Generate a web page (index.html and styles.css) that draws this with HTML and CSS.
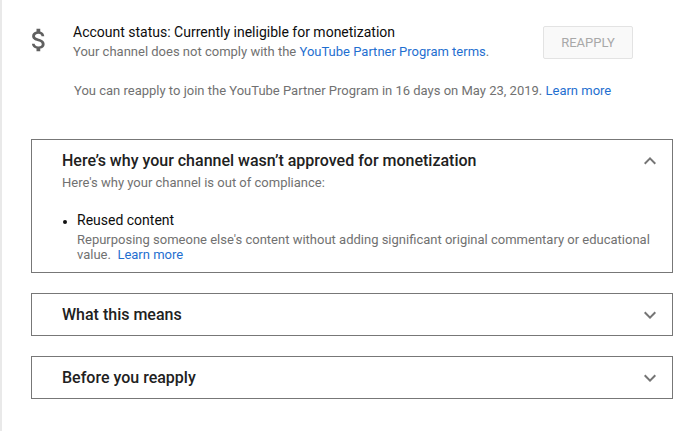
FILE: index.html
```html
<!DOCTYPE html>
<html lang="en">
<head>
<meta charset="utf-8">
<title>Monetization</title>
<link rel="stylesheet" href="styles.css">
</head>
<body>
<div class="page">
  <section class="status">
    <svg class="status-icon" viewBox="0 0 24 24" width="30" height="30" aria-hidden="true">
      <path d="M11.8 10.9c-2.27-.59-3-1.2-3-2.15 0-1.09 1.01-1.850 2.7-1.85 1.78 0 2.44.85 2.5 2.1h2.21c-.07-1.72-1.12-3.3-3.21-3.81V3h-3v2.16c-1.94.42-3.5 1.68-3.5 3.61 0 2.31 1.91 3.46 4.7 4.13 2.5.6 3 1.48 3 2.41 0 .69-.49 1.79-2.7 1.79-2.06 0-2.87-.92-2.98-2.1h-2.2c.12 2.19 1.76 3.42 3.68 3.83V21h3v-2.15c1.95-.37 3.5-1.5 3.5-3.55 0-2.84-2.43-3.81-4.7-4.4z"/>
    </svg>
    <div class="status-body">
      <div class="status-top">
        <div class="status-text">
          <div class="status-title">Account status: Currently ineligible for monetization</div>
          <div class="status-sub">Your channel does not comply with the <a class="link" href="#">YouTube Partner Program terms</a>.</div>
        </div>
        <button class="btn-reapply" type="button">Reapply</button>
      </div>
      <p class="note">You can reapply to join the YouTube Partner Program in 16 days on May 23, 2019. <a class="link" href="#">Learn more</a></p>
    </div>
  </section>

  <section class="panel panel-open">
    <div class="panel-head">
      <h2 class="panel-title">Here’s why your channel wasn’t approved for monetization</h2>
      <svg class="chev" viewBox="0 0 24 24" width="24" height="24" aria-hidden="true"><path d="M12 8l-6 6 1.41 1.41L12 10.83l4.59 4.58L18 14z"/></svg>
    </div>
    <div class="panel-sub">Here's why your channel is out of compliance:</div>
    <div class="reason">
      <span class="bullet"></span>
      <div class="reason-body">
        <div class="reason-title">Reused content</div>
        <div class="reason-desc">Repurposing someone else's content without adding significant original commentary or educational value.&nbsp; <a class="link" href="#">Learn more</a></div>
      </div>
    </div>
  </section>

  <section class="panel">
    <div class="panel-head">
      <h2 class="panel-title">What this means</h2>
      <svg class="chev" viewBox="0 0 24 24" width="24" height="24" aria-hidden="true"><path d="M16.59 8.59L12 13.170 7.41 8.59 6 10l6 6 6-6z"/></svg>
    </div>
  </section>

  <section class="panel">
    <div class="panel-head">
      <h2 class="panel-title">Before you reapply</h2>
      <svg class="chev" viewBox="0 0 24 24" width="24" height="24" aria-hidden="true"><path d="M16.59 8.59L12 13.170 7.41 8.59 6 10l6 6 6-6z"/></svg>
    </div>
  </section>
</div>
</body>
</html>
```
FILE: styles.css
```css
* { box-sizing: border-box; }
html, body { margin: 0; padding: 0; background: #fff; }
body {
  font-family: Roboto, "Liberation Sans", Arial, sans-serif;
  color: #0d0d0d;
  width: 690px;
  height: 431px;
  overflow: hidden;
}
.page {
  border-left: 2px solid #e9e9e9;
  min-height: 431px;
  padding: 22px 17px 0 29px;
}
.status {
  display: flex;
  align-items: flex-start;
}
.status-icon {
  fill: #606060;
  margin: 3px 0 0 -7px;
  flex: none;
}
.status-body {
  flex: 1;
  margin-left: 19px;
}
.status-top {
  display: flex;
  align-items: center;
  padding-right: 40px;
}
.status-text { flex: 1; }
.status-title {
  font-size: 14px;
  line-height: 20px;
  color: #0d0d0d;
}
.status-sub {
  font-size: 13px;
  line-height: 20px;
  color: #717171;
}
.link { color: #1f6fd0; text-decoration: none; }
.btn-reapply {
  width: 90px;
  height: 33px;
  border: 1px solid #e3e3e3;
  border-radius: 2px;
  background: #f9f9f9;
  color: #a8a8a8;
  font-family: inherit;
  font-size: 13px;
  text-transform: uppercase;
  margin-top: 1px;
  padding: 0;
}
.note {
  margin: 19px 0 0 1px;
  font-size: 13px;
  line-height: 20px;
  color: #717171;
}
.panel {
  border: 1px solid #777;
  margin-top: 20px;
  padding: 9px 10px 8px 30px;
}
.panel-open {
  margin-top: 38px;
  padding-bottom: 10px;
}
.panel-head {
  display: flex;
  align-items: center;
  justify-content: space-between;
}
.panel-title {
  margin: 0;
  font-size: 16px;
  line-height: 24px;
  font-weight: 500;
  color: #212121;
}
.chev { fill: #757575; flex: none; }
.panel-sub {
  font-size: 13px;
  line-height: 20px;
  color: #717171;
}
.reason {
  display: flex;
  margin-top: 17px;
}
.bullet {
  width: 4px;
  height: 4px;
  border-radius: 50%;
  background: #111;
  margin: 10px 10px 0 1px;
  flex: none;
}
.reason-body { flex: 1; padding-right: 10px; }
.reason-title {
  font-size: 14px;
  line-height: 20px;
  color: #0d0d0d;
}
.reason-desc {
  margin-top: 2px;
  font-size: 13px;
  line-height: 15px;
  color: #717171;
}
```
